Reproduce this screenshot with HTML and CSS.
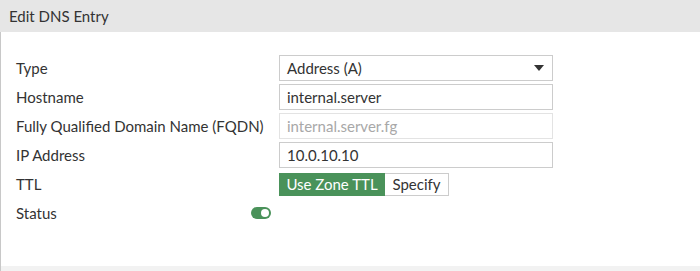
FILE: index.html
```html
<!DOCTYPE html>
<html>
<head>
<meta charset="utf-8">
<link rel="stylesheet" href="styles.css">
</head>
<body>
<div class="dialog">
  <div class="header">Edit DNS Entry</div>
  <div class="content">
    <div class="form">
      <div class="row">
        <div class="label">Type</div>
        <div class="control">
          <div class="select">
            <span>Address (A)</span>
            <svg class="caret" width="10" height="6" viewBox="0 0 10 6"><path d="M0 0H10L5 6Z" fill="#333"/></svg>
          </div>
        </div>
      </div>
      <div class="row">
        <div class="label">Hostname</div>
        <div class="control"><div class="input">internal.server</div></div>
      </div>
      <div class="row">
        <div class="label">Fully Qualified Domain Name (FQDN)</div>
        <div class="control"><div class="input disabled">internal.server.fg</div></div>
      </div>
      <div class="row">
        <div class="label">IP Address</div>
        <div class="control"><div class="input">10.0.10.10</div></div>
      </div>
      <div class="row">
        <div class="label">TTL</div>
        <div class="control">
          <div class="btn-group">
            <div class="btn active">Use Zone TTL</div>
            <div class="btn">Specify</div>
          </div>
        </div>
      </div>
      <div class="row">
        <div class="label">Status<span class="toggle"><span class="knob"></span></span></div>
        <div class="control"></div>
      </div>
    </div>
  </div>
  <div class="footer"></div>
</div>
</body>
</html>
```

FILE: styles.css
```css
html, body {
  margin: 0;
  padding: 0;
  background: #fff;
}
body {
  font-family: Lato, "Open Sans", sans-serif;
  font-size: 15px;
  color: #333;
}
.dialog {
  width: 700px;
  height: 271px;
  display: flex;
  flex-direction: column;
}
.header {
  height: 32px;
  line-height: 32px;
  background: #e6e6e6;
  padding-left: 9px;
  font-size: 15px;
  color: #333;
}
.content {
  flex: 1;
  border-left: 1px solid #c8c8c8;
  padding-top: 23px;
}
.footer {
  height: 5px;
  background: #f2f2f2;
  border-left: 1px solid #c8c8c8;
}
.form {
  display: flex;
  flex-direction: column;
  gap: 3px;
}
.row {
  display: flex;
  align-items: center;
  height: 26px;
}
.label {
  flex: none;
  width: 278px;
  box-sizing: border-box;
  padding-left: 15px;
  padding-right: 8px;
  display: flex;
  align-items: center;
  justify-content: space-between;
}
.control {
  flex: none;
  width: 274px;
}
.select, .input {
  box-sizing: border-box;
  height: 26px;
  border: 1px solid #cccccc;
  padding: 0 7px;
  display: flex;
  align-items: center;
  justify-content: space-between;
  font-size: 15px;
  color: #333;
}
.input.disabled {
  border-color: #e3e3e3;
  color: #a8a8a8;
}
.caret {
  margin-right: 1px;
}
.btn-group {
  display: flex;
  height: 23px;
}
.btn {
  box-sizing: border-box;
  height: 23px;
  line-height: 21px;
  border: 1px solid #cccccc;
  padding: 0 4px;
  font-size: 15px;
  text-align: center;
  white-space: nowrap;
}
.btn.active {
  background: #4a925a;
  border-color: #4a925a;
  color: #fff;
  width: 106px;
}
.btn + .btn {
  border-left: none;
  width: 64px;
}
.toggle {
  width: 20px;
  height: 12px;
  border-radius: 6px;
  background: #4a925a;
  display: flex;
  align-items: center;
  justify-content: flex-end;
  padding: 0 2px;
  box-sizing: border-box;
}
.knob {
  width: 8px;
  height: 8px;
  border-radius: 50%;
  background: #fff;
}
```
